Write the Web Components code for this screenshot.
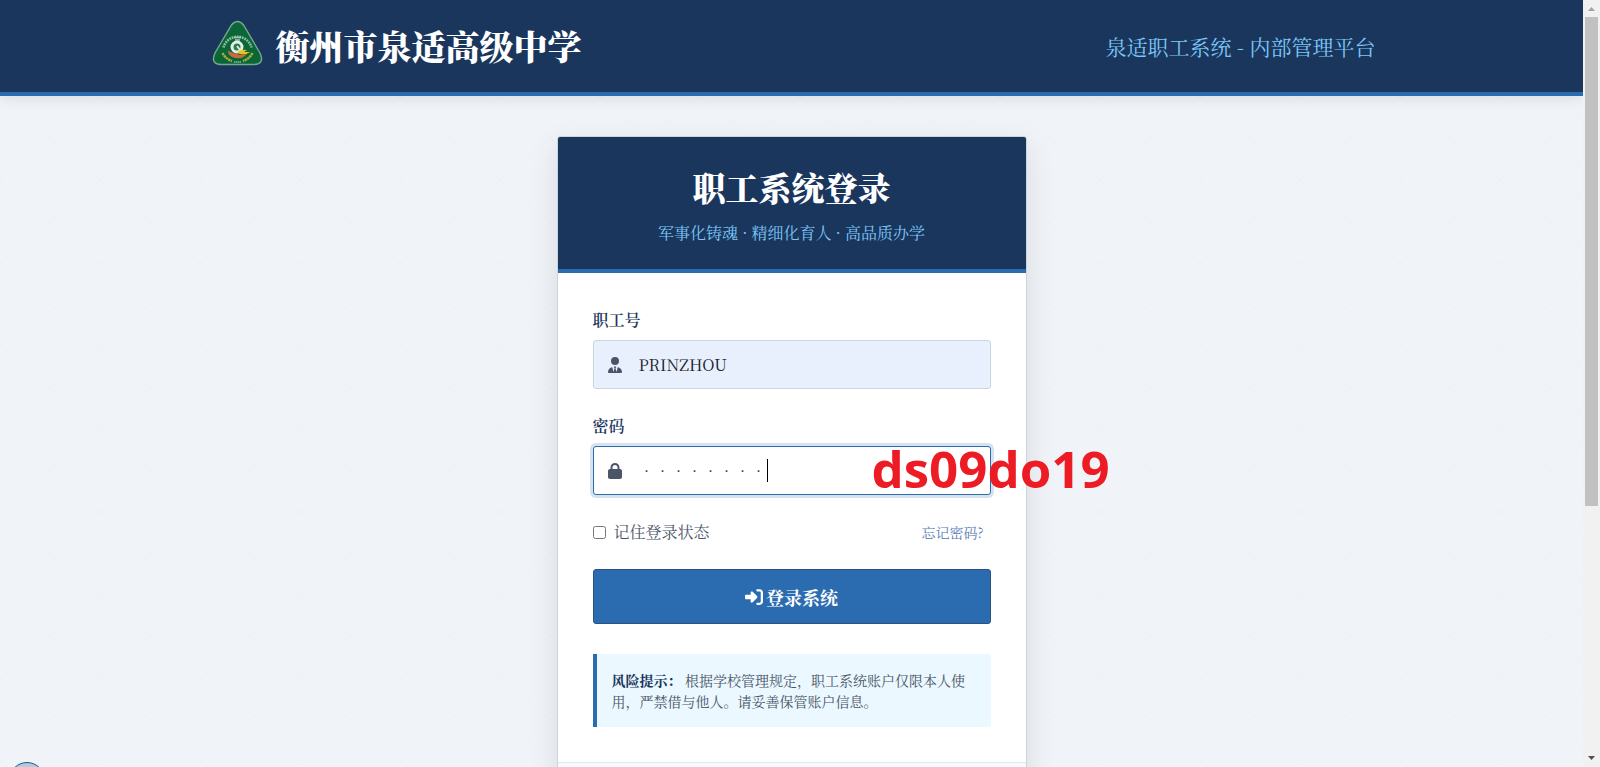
<!DOCTYPE html>
<html lang="zh-CN">
<head>
    <meta charset="UTF-8">
    <meta name="viewport" content="width=device-width, initial-scale=1.0">
    <title>职工系统登录</title>
    <style>
        :root {
            --navy: #1a365d;
            --blue: #2b6cb0;
            --sky: #7cc7f7;
            --slate: #4a5568;
            --line: #cbd5e0;
        }

        body {
            margin: 0;
            height: 100vh;
            overflow: hidden;
            font-family: "Noto Serif CJK SC", "Noto Sans CJK SC", serif;
            font-size: 16px;
            line-height: 24px;
            color: var(--slate);
        }
    </style>
</head>
<body>
    <app-shell>
        <school-header slot="header">
            <span slot="name">衡州市泉适高级中学</span>
            <span slot="platform">泉适职工系统 - 内部管理平台</span>
        </school-header>
        <login-card>
            <span slot="title">职工系统登录</span>
            <span slot="motto">军事化铸魂 · 精细化育人 · 高品质办学</span>
            <form-field label="职工号" icon="user" type="text" value="PRINZHOU" filled></form-field>
            <form-field label="密码" icon="lock" type="password" value="ds09do19" active>ds09do19</form-field>
            <login-options></login-options>
            <submit-button>登录系统</submit-button>
            <risk-notice>
                <strong>风险提示：</strong>
                根据学校管理规定，职工系统账户仅限本人使用，严禁借与他人。请妥善保管账户信息。
            </risk-notice>
        </login-card>
        <scroll-rail slot="rail"></scroll-rail>
    </app-shell>

    <script>
        const ICONS = {
            user: '<svg viewBox="0 0 448 512" width="14" height="16" fill="currentColor" aria-hidden="true"><path d="M96 128a128 128 0 1 0 256 0A128 128 0 1 0 96 128zm94.5 200.2l18.6 31L175.8 483.1l-36-146.9c-2-8.1-9.8-13.4-17.9-11.3C51.9 342.4 0 405.8 0 481.3c0 17 13.8 30.7 30.7 30.7l131.7 0c0 0 0 0 .1 0l5.5 0 112 0 5.5 0c0 0 0 0 .1 0l131.7 0c17 0 30.7-13.8 30.7-30.7c0-75.5-51.9-138.9-121.9-156.4c-8.1-2-15.9 3.3-17.9 11.3l-36 146.9L238.9 359.2l18.6-31c6.4-10.7-1.3-24.2-13.7-24.2L224 304l-19.7 0c-12.4 0-20.1 13.6-13.7 24.2z"/></svg>',
            lock: '<svg viewBox="0 0 448 512" width="14" height="16" fill="currentColor" aria-hidden="true"><path d="M144 144v48H304V144c0-44.2-35.8-80-80-80s-80 35.8-80 80zM80 192V144C80 64.5 144.5 0 224 0s144 64.5 144 144v48h16c35.3 0 64 28.7 64 64V448c0 35.3-28.7 64-64 64H64c-35.3 0-64-28.7-64-64V256c0-35.3 28.7-64 64-64H80z"/></svg>',
            enter: '<svg viewBox="0 0 512 512" width="18" height="18" fill="currentColor" aria-hidden="true"><path d="M217.9 105.9L340.7 228.7c7.2 7.2 11.3 17.1 11.3 27.3s-4.1 20.1-11.3 27.3L217.9 406.1c-6.4 6.4-15 9.9-24 9.9c-18.7 0-33.9-15.2-33.9-33.9l0-62.1L32 320c-17.7 0-32-14.3-32-32l0-64c0-17.7 14.3-32 32-32l128 0 0-62.1c0-18.7 15.2-33.9 33.9-33.9c9 0 17.6 3.6 24 9.9zM352 416l64 0c17.7 0 32-14.3 32-32l0-256c0-17.7-14.3-32-32-32l-64 0c-17.7 0-32-14.3-32-32s14.3-32 32-32l64 0c53 0 96 43 96 96l0 256c0 53-43 96-96 96l-64 0c-17.7 0-32-14.3-32-32s14.3-32 32-32z"/></svg>'
        };

        // Page frame: header, content and the scroll rail on the right
        class AppShell extends HTMLElement {
            constructor() {
                super();
                this.attachShadow({ mode: 'open' }).innerHTML = `
                    <style>
                        :host {
                            display: flex;
                            height: 100%;
                        }

                        .page {
                            position: relative;
                            flex: 1;
                            min-width: 0;
                            overflow: hidden;
                            /* Very light diamond mesh */
                            background: #f0f4f8 url("data:image/svg+xml,%3Csvg xmlns='http://www.w3.org/2000/svg' width='100' height='83'%3E%3Cpath d='M0 0L100 83M100 0L0 83' stroke='%231a365d' stroke-opacity='.015' fill='none'/%3E%3C/svg%3E") 0 14px;
                        }

                        main {
                            padding: 40px 16px;
                        }

                        /* Floating round button, mostly below the fold */
                        .bubble {
                            position: absolute;
                            left: 9px;
                            bottom: -31px;
                            width: 36px;
                            height: 36px;
                            padding: 0;
                            border: 1px solid #1c5a8f;
                            border-radius: 50%;
                            background: linear-gradient(#b4c6d8, #e2eaf2);
                        }
                    </style>
                    <div class="page">
                        <slot name="header"></slot>
                        <main><slot></slot></main>
                        <button class="bubble" type="button" aria-label="打开助手"></button>
                    </div>
                    <slot name="rail"></slot>
                `;
            }
        }

        // Top bar with the school badge
        class SchoolHeader extends HTMLElement {
            constructor() {
                super();
                this.attachShadow({ mode: 'open' }).innerHTML = `
                    <style>
                        :host {
                            display: block;
                            position: relative;
                            background: var(--navy);
                            border-bottom: 4px solid var(--blue);
                            box-shadow: 0 4px 12px rgba(0, 0, 0, 0.08);
                        }

                        header {
                            display: flex;
                            align-items: center;
                            justify-content: space-between;
                            box-sizing: border-box;
                            max-width: 1200px;
                            margin: 0 auto;
                            padding: 16px;
                        }

                        .brand {
                            display: flex;
                            align-items: center;
                            gap: 8px;
                        }

                        svg {
                            display: block;
                        }

                        h1 {
                            margin: 0;
                            font-size: 34px;
                            line-height: 40px;
                            font-weight: 900;
                            color: #fff;
                        }

                        p {
                            margin: 0;
                            font-size: 21px;
                            color: var(--sky);
                        }
                    </style>
                    <header>
                        <div class="brand">
                            <svg width="60" height="60" viewBox="0 0 60 60" aria-hidden="true">
                                <path d="M23.500 9Q29.500 2 35.500 9L52 37Q57 48 46 48.500H13Q2 48 7 37Z" fill="#0a6637" stroke="#73a98c" stroke-width="1.400"/>
                                <path d="M15.500 31.500a14.500 14.500 0 0 1 28 0" fill="none" stroke="#8fb89e" stroke-width="2.600" stroke-dasharray="1.800 .800"/>
                                <path d="M26 21.500h7M27 24h5" stroke="#a9c9b4" stroke-width="1.400"/>
                                <path d="M19.500 34.500a10.500 9.500 0 0 0 20 2q-4 3-9 2t-11-4z" fill="#c76a3e"/>
                                <circle cx="29" cy="31" r="5" fill="#2c7a50" stroke="#e3eee7" stroke-width="3"/>
                                <path d="M29 37q3-4 10-3l-3 2h6q-5 4-13 1z" fill="#e8c51c"/>
                                <path d="M29 30l3 4" stroke="#e3eee7" stroke-width="1.800"/>
                                <path d="M14.500 37q3 6 9.500 8M44.500 37q-3 6-9.500 8" fill="none" stroke="#a8ad3c" stroke-width="2.400" stroke-dasharray="2.400 .500"/>
                                <path d="M26 46h7" stroke="#8fb89e" stroke-width="1.600" stroke-dasharray="1.400 .500"/>
                            </svg>
                            <h1><slot name="name"></slot></h1>
                        </div>
                        <p><slot name="platform"></slot></p>
                    </header>
                `;
            }
        }

        // Login card
        class LoginCard extends HTMLElement {
            constructor() {
                super();
                this.attachShadow({ mode: 'open' }).innerHTML = `
                    <style>
                        :host {
                            display: block;
                            box-sizing: border-box;
                            max-width: 470px;
                            margin: 0 auto;
                            border: 1px solid var(--line);
                            border-radius: 3px;
                            background: #fff;
                            box-shadow: 0 10px 30px rgba(0, 0, 0, 0.1);
                        }

                        header {
                            padding: 30px 30px 24px;
                            text-align: center;
                            background: var(--navy);
                            border-bottom: 4px solid var(--blue);
                            border-radius: 2px 2px 0 0;
                        }

                        h2 {
                            margin: 0 0 14px;
                            font-size: 33px;
                            line-height: 40px;
                            font-weight: 900;
                            color: #fff;
                        }

                        p {
                            margin: 0;
                            color: var(--sky);
                        }

                        form {
                            display: flex;
                            flex-direction: column;
                            gap: 25px;
                            padding: 35px;
                        }

                        footer {
                            height: 60px;
                            background: #f7fafc;
                            border-top: 1px solid #e2e8f0;
                        }
                    </style>
                    <header>
                        <h2><slot name="title"></slot></h2>
                        <p><slot name="motto"></slot></p>
                    </header>
                    <form><slot></slot></form>
                    <footer></footer>
                `;
                this.shadowRoot.querySelector('form').addEventListener('submit', (event) => event.preventDefault());
            }
        }

        // Label + icon + input; slotted text becomes a hint over the field
        class FormField extends HTMLElement {
            constructor() {
                super();
                this.attachShadow({ mode: 'open' }).innerHTML = `
                    <style>
                        :host {
                            display: block;
                        }

                        label {
                            display: block;
                            margin-bottom: 8px;
                            font-weight: 600;
                            color: var(--navy);
                        }

                        .box {
                            position: relative;
                            display: flex;
                            align-items: center;
                            gap: 17px;
                            padding: 0 14px;
                            border: 1px solid var(--line);
                            border-radius: 3px;
                            background: #fff;
                        }

                        :host([filled]) .box {
                            background: #e8f0fe;
                        }

                        :host([active]) .box {
                            border-color: var(--blue);
                            box-shadow: 0 0 0 3px rgba(43, 108, 176, 0.2);
                        }

                        svg {
                            flex: none;
                        }

                        input {
                            flex: 1;
                            min-width: 0;
                            height: 47px;
                            padding: 0;
                            border: 0;
                            outline: 0;
                            background: none;
                            font-family: inherit;
                            font-size: 16px;
                            color: #1a202c;
                        }

                        .caret {
                            display: none;
                            position: absolute;
                            left: 173px;
                            top: 12px;
                            width: 1px;
                            height: 23px;
                            background: #000;
                        }

                        :host([active]) .caret {
                            display: block;
                        }

                        .hint {
                            position: absolute;
                            left: 278px;
                            bottom: 2px;
                            font-family: "Open Sans", sans-serif;
                            font-size: 51px;
                            line-height: 47px;
                            font-weight: 700;
                            white-space: nowrap;
                            color: #ed1c24;
                        }
                    </style>
                    <label for="field"></label>
                    <div class="box">
                        <input id="field">
                        <span class="caret"></span>
                        <span class="hint"><slot></slot></span>
                    </div>
                `;
            }

            connectedCallback() {
                const input = this.shadowRoot.querySelector('input');
                this.shadowRoot.querySelector('label').textContent = this.getAttribute('label');
                input.insertAdjacentHTML('beforebegin', ICONS[this.getAttribute('icon')]);
                input.type = this.getAttribute('type');
                input.value = this.getAttribute('value');
            }
        }

        // Remember me + forgotten password
        class LoginOptions extends HTMLElement {
            constructor() {
                super();
                this.attachShadow({ mode: 'open' }).innerHTML = `
                    <style>
                        :host {
                            display: flex;
                            align-items: center;
                            justify-content: space-between;
                        }

                        label {
                            display: flex;
                            align-items: center;
                            gap: 8px;
                        }

                        input {
                            width: 13px;
                            height: 13px;
                            margin: 0;
                        }

                        a {
                            padding: 0 7px;
                            font-size: 14px;
                            color: #5a7bb5;
                            text-decoration: none;
                        }
                    </style>
                    <label><input type="checkbox">记住登录状态</label>
                    <a href="#forgot">忘记密码?</a>
                `;
            }
        }

        class SubmitButton extends HTMLElement {
            constructor() {
                super();
                this.attachShadow({ mode: 'open' }).innerHTML = `
                    <style>
                        :host {
                            display: block;
                        }

                        button {
                            display: flex;
                            align-items: center;
                            justify-content: center;
                            gap: 3px;
                            width: 100%;
                            height: 55px;
                            border: 1px solid #2c5282;
                            border-radius: 3px;
                            background: var(--blue);
                            font-family: inherit;
                            font-size: 18px;
                            font-weight: 700;
                            color: #fff;
                            cursor: pointer;
                        }
                    </style>
                    <button type="submit">${ICONS.enter}<span><slot></slot></span></button>
                `;
            }
        }

        class RiskNotice extends HTMLElement {
            constructor() {
                super();
                this.attachShadow({ mode: 'open' }).innerHTML = `
                    <style>
                        :host {
                            display: block;
                            margin-top: 5px;
                            padding: 16px 15px 15px;
                            border-left: 4px solid var(--blue);
                            border-radius: 0 3px 3px 0;
                            background: #ebf8ff;
                            font-size: 14px;
                            line-height: 21px;
                        }

                        ::slotted(strong) {
                            color: var(--navy);
                        }
                    </style>
                    <slot></slot>
                `;
            }
        }

        // Vertical scroll rail
        class ScrollRail extends HTMLElement {
            constructor() {
                super();
                this.attachShadow({ mode: 'open' }).innerHTML = `
                    <style>
                        :host {
                            display: flex;
                            flex-direction: column;
                            align-items: center;
                            flex: none;
                            width: 17px;
                            background: #f1f1f1;
                        }

                        svg {
                            flex: none;
                        }

                        .track {
                            display: flex;
                            flex-direction: column;
                            flex: 1;
                            width: 13px;
                        }

                        .thumb {
                            flex: 2;
                            background: #c1c1c1;
                        }

                        .rest {
                            flex: 1;
                        }
                    </style>
                    <svg width="17" height="17" aria-hidden="true"><path d="M5 11h7L8.500 7z" fill="#a3a3a3"/></svg>
                    <div class="track"><div class="thumb"></div><div class="rest"></div></div>
                    <svg width="17" height="17" aria-hidden="true"><path d="M5 6h7L8.500 10z" fill="#505050"/></svg>
                `;
            }
        }

        customElements.define('app-shell', AppShell);
        customElements.define('school-header', SchoolHeader);
        customElements.define('login-card', LoginCard);
        customElements.define('form-field', FormField);
        customElements.define('login-options', LoginOptions);
        customElements.define('submit-button', SubmitButton);
        customElements.define('risk-notice', RiskNotice);
        customElements.define('scroll-rail', ScrollRail);
    </script>
</body>
</html>
